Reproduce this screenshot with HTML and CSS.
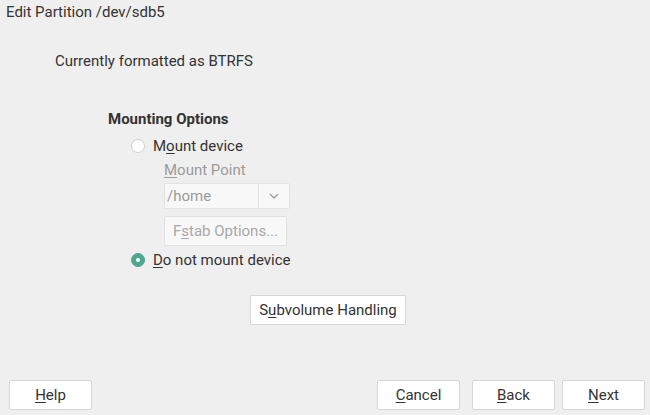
FILE: index.html
```html
<!DOCTYPE html>
<html>
<head>
<meta charset="utf-8">
<link rel="stylesheet" href="styles.css">
</head>
<body>
<div class="dialog">
  <div class="title">Edit Partition /dev/sdb5</div>
  <div class="content">
    <div class="formatted">Currently formatted as BTRFS</div>
    <div class="group">
      <div class="group-title">Mounting Options</div>
      <div class="options">
        <label class="radio-row">
          <span class="radio"></span>
          <span>M<u>o</u>unt device</span>
        </label>
        <div class="sub">
          <div class="field-label"><u>M</u>ount Point</div>
          <div class="combo">
            <span class="combo-text">/home</span>
            <span class="combo-btn">
              <svg width="12" height="8" viewBox="0 0 12 8"><path d="M2 2 L6 6 L10 2" fill="none" stroke="#9a9a9a" stroke-width="1.3"/></svg>
            </span>
          </div>
          <div class="btn disabled fstab">F<u>s</u>tab Options...</div>
        </div>
        <label class="radio-row">
          <span class="radio checked"></span>
          <span><u>D</u>o not mount device</span>
        </label>
      </div>
    </div>
    <div class="subvol-row">
      <div class="btn subvol">S<u>u</u>bvolume Handling</div>
    </div>
  </div>
  <div class="footer">
    <div class="btn wide"><u>H</u>elp</div>
    <div class="spacer"></div>
    <div class="btn wide"><u>C</u>ancel</div>
    <div class="btn wide back"><u>B</u>ack</div>
    <div class="btn wide"><u>N</u>ext</div>
  </div>
</div>
</body>
</html>
```
FILE: styles.css
```css
html, body {
  margin: 0;
  padding: 0;
  background: #efefef;
}
body {
  font-family: Roboto, "Noto Sans", sans-serif;
  font-size: 15px;
  color: #333333;
}
.dialog {
  width: 650px;
  height: 415px;
  display: flex;
  flex-direction: column;
}
.title {
  padding: 3px 0 0 6px;
  height: 21px;
  line-height: 18px;
}
.content {
  flex: 1;
  display: flex;
  flex-direction: column;
}
.formatted {
  margin: 28px 0 0 55px;
  height: 18px;
  line-height: 18px;
}
.group {
  margin: 40px 0 0 108px;
}
.group-title {
  font-weight: bold;
  height: 18px;
  line-height: 18px;
}
.options {
  padding-left: 23px;
  margin-top: 9px;
}
.radio-row {
  display: flex;
  align-items: center;
  height: 18px;
  line-height: 18px;
  gap: 8px;
}
.radio {
  width: 12px;
  height: 12px;
  border: 1px solid #d0d0d0;
  background: #ffffff;
  border-radius: 50%;
  display: inline-block;
  position: relative;
}
.radio.checked {
  background: #4ea890;
  border-color: #4ea890;
}
.radio.checked::after {
  content: "";
  position: absolute;
  left: 4px;
  top: 4px;
  width: 4px;
  height: 4px;
  border-radius: 50%;
  background: #ffffff;
}
.sub {
  padding-left: 33px;
  margin-top: 6px;
  margin-bottom: 5px;
}
.field-label {
  color: #9b9b9b;
  height: 18px;
  line-height: 18px;
}
.combo {
  margin-top: 4px;
  width: 124px;
  height: 24px;
  border: 1px solid #e2e2e2;
  border-radius: 2px;
  background: #f8f8f8;
  display: flex;
  color: #9b9b9b;
}
.combo-text {
  flex: 1;
  line-height: 24px;
  padding-left: 2px;
}
.combo-btn {
  width: 30px;
  border-left: 1px solid #e2e2e2;
  display: flex;
  align-items: center;
  justify-content: center;
}
.btn {
  box-sizing: border-box;
  border: 1px solid #d6d6d6;
  border-radius: 2px;
  background: #ffffff;
  display: flex;
  align-items: center;
  justify-content: center;
  color: #333333;
}
.btn.disabled {
  background: #f8f8f8;
  border-color: #e2e2e2;
  color: #a8a8a8;
}
.fstab {
  margin-top: 7px;
  width: 123px;
  height: 30px;
}
.subvol-row {
  display: flex;
  padding-left: 250px;
  margin-top: 26px;
}
.subvol {
  width: 156px;
  height: 30px;
}
.footer {
  display: flex;
  padding: 0 5px 5px 9px;
  gap: 12px;
}
.spacer {
  flex: 1;
}
.wide {
  width: 83px;
  height: 30px;
}
.back {
  margin-right: -5px;
}
u {
  text-decoration-thickness: 1px;
  text-underline-offset: 2px;
}
```
